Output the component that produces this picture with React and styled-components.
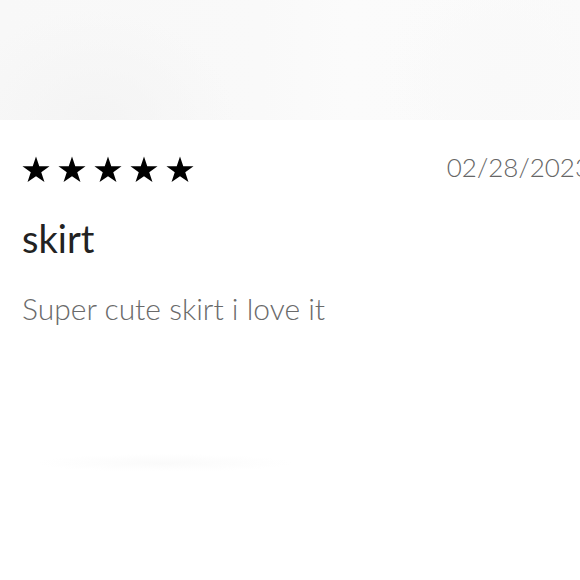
import React from "react";
import styled, { createGlobalStyle } from "styled-components";

const GlobalStyle = createGlobalStyle`
  html, body {
    margin: 0;
    padding: 0;
    background: #ffffff;
  }
  body {
    width: 580px;
    height: 580px;
    overflow: hidden;
    font-family: "Lato", "Noto Sans", sans-serif;
  }
`;

const Page = styled.div`
  width: 580px;
  height: 580px;
  overflow: hidden;
  display: flex;
  flex-direction: column;
  background: #ffffff;
`;

const PhotoStrip = styled.div`
  height: 120px;
  flex-shrink: 0;
  background:
    radial-gradient(ellipse 140px 110px at 95px 120px, #f4f4f4 0%, rgba(244, 244, 244, 0) 100%),
    radial-gradient(ellipse 120px 120px at 500px 80px, #f9f9f9 0%, rgba(249, 249, 249, 0) 100%),
    linear-gradient(90deg, #f8f8f8 0%, #f9f9f9 45%, #fbfbfb 60%, #fafafa 100%);
`;

const Review = styled.div`
  display: flex;
  flex-direction: column;
  padding: 35px 0 0 22px;
  flex: 1;
`;

const TopRow = styled.div`
  display: flex;
  align-items: center;
  justify-content: space-between;
  width: 568px;
`;

const Stars = styled.div`
  display: flex;
  gap: 8px;
`;

const DateText = styled.span`
  font-size: 26px;
  font-weight: 300;
  color: #666666;
  white-space: nowrap;
  flex-shrink: 0;
  margin-top: -4px;
`;

const Title = styled.h2`
  margin: 33px 0 0;
  font-size: 38px;
  font-weight: 400;
  line-height: 44px;
  color: #222222;
`;

const Body = styled.p`
  margin: 30px 0 0;
  font-size: 30px;
  font-weight: 300;
  line-height: 36px;
  color: #6a6a6a;
`;

const Shadow = styled.div`
  width: 260px;
  height: 18px;
  margin: 128px 0 0 12px;
  background: radial-gradient(ellipse at center, #fafafa 0%, rgba(250, 250, 250, 0) 70%);
`;

const Star = () => (
  <svg width="28" height="27" viewBox="0 0 24 23">
    <path
      d="M12 0.4l2.8 8.3h8.8l-7.1 5.2 2.75 8.4L12 17.2l-7.25 5.1 2.75-8.4L0.4 8.7h8.8z"
      fill="#000"
    />
  </svg>
);

export default function App() {
  return (
    <>
      <GlobalStyle />
      <Page>
        <PhotoStrip />
        <Review>
          <TopRow>
            <Stars>
              {[0, 1, 2, 3, 4].map((i) => (
                <Star key={i} />
              ))}
            </Stars>
            <DateText>02/28/2023</DateText>
          </TopRow>
          <Title>skirt</Title>
          <Body>Super cute skirt i love it</Body>
          <Shadow />
        </Review>
      </Page>
    </>
  );
}
